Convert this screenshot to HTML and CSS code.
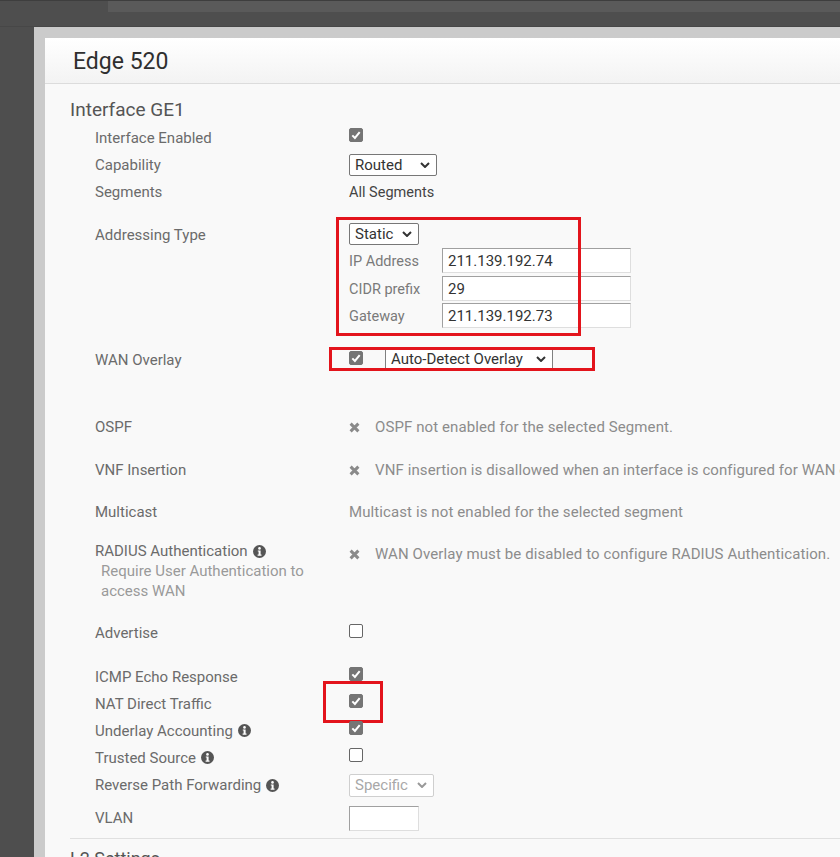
FILE: index.html
```html
<!DOCTYPE html>
<html>
<head>
<meta charset="utf-8">
<title>Edge 520</title>
<link rel="stylesheet" href="styles.css">
</head>
<body>
<div class="topbar"><div class="tabstrip"></div></div>
<div class="frame">
  <div class="panel">
    <div class="panel-head"><h1 class="title">Edge 520</h1></div>
    <div class="panel-body">
      <h2 class="section">Interface GE1</h2>
      <div class="form">
        <div class="row h27 first">
          <div class="label">Interface Enabled</div>
          <div class="val"><span class="cb on"><svg viewBox="0 0 14 14"><polyline points="3.3,7.4 5.9,10 10.7,4.2"/></svg></span></div>
        </div>
        <div class="row h27">
          <div class="label">Capability</div>
          <div class="val"><div class="sel w88"><span>Routed</span><svg class="chev" viewBox="0 0 10 6"><polyline points="1,1 5,5 9,1"/></svg></div></div>
        </div>
        <div class="row h28">
          <div class="label">Segments</div>
          <div class="val"><span class="plain">All Segments</span></div>
        </div>
        <div class="row addr">
          <div class="label top">Addressing Type</div>
          <div class="val col">
            <div class="sel w70 mt2"><span>Static</span><svg class="chev" viewBox="0 0 10 6"><polyline points="1,1 5,5 9,1"/></svg></div>
            <div class="subgrid">
              <div class="sublabel">IP Address</div><div class="input wide">211.139.192.74</div>
              <div class="sublabel">CIDR prefix</div><div class="input wide">29</div>
              <div class="sublabel">Gateway</div><div class="input wide">211.139.192.73</div>
            </div>
            <div class="mark mark-addr"></div>
          </div>
        </div>
        <div class="row wan">
          <div class="label">WAN Overlay</div>
          <div class="val">
            <span class="cb on"><svg viewBox="0 0 14 14"><polyline points="3.3,7.4 5.9,10 10.7,4.2"/></svg></span>
            <div class="sel w168 wansel"><span>Auto-Detect Overlay</span><svg class="chev" viewBox="0 0 10 6"><polyline points="1,1 5,5 9,1"/></svg></div>
            <div class="mark mark-wan"></div>
          </div>
        </div>
        <div class="row h42 ospf">
          <div class="label">OSPF</div>
          <div class="val msg"><svg class="x" viewBox="0 0 11 11"><path d="M1.6 1.6 L9.4 9.4 M9.4 1.6 L1.6 9.4"/></svg><span>OSPF not enabled for the selected Segment.</span></div>
        </div>
        <div class="row h42 vnf">
          <div class="label">VNF Insertion</div>
          <div class="val msg"><svg class="x" viewBox="0 0 11 11"><path d="M1.6 1.6 L9.4 9.4 M9.4 1.6 L1.6 9.4"/></svg><span>VNF insertion is disallowed when an interface is configured for WAN overlay.</span></div>
        </div>
        <div class="row h42">
          <div class="label">Multicast</div>
          <div class="val msg"><span class="noicon">Multicast is not enabled for the selected segment</span></div>
        </div>
        <div class="row radius">
          <div class="label top">
            <div class="lline">RADIUS Authentication <svg class="info" viewBox="0 0 13 13"><circle cx="6.5" cy="6.5" r="6.5"/><circle class="ii" cx="6.5" cy="3.4" r="1.3"/><path class="ii" d="M4.8 5.4 H7.6 V9.6 H8.5 V10.8 H4.6 V9.6 H5.6 V6.6 H4.8 Z"/></svg></div>
            <div class="subnote">Require User Authentication to access WAN</div>
          </div>
          <div class="val msg top3"><svg class="x" viewBox="0 0 11 11"><path d="M1.6 1.6 L9.4 9.4 M9.4 1.6 L1.6 9.4"/></svg><span>WAN Overlay must be disabled to configure RADIUS Authentication.</span></div>
        </div>
        <div class="row h26 advertise">
          <div class="label">Advertise</div>
          <div class="val"><span class="cb"></span></div>
        </div>
        <div class="row h27 icmp">
          <div class="label">ICMP Echo Response</div>
          <div class="val"><span class="cb on"><svg viewBox="0 0 14 14"><polyline points="3.3,7.4 5.9,10 10.7,4.2"/></svg></span></div>
        </div>
        <div class="row h27">
          <div class="label">NAT Direct Traffic</div>
          <div class="val"><span class="cb on"><svg viewBox="0 0 14 14"><polyline points="3.3,7.4 5.9,10 10.7,4.2"/></svg></span><div class="mark mark-nat"></div></div>
        </div>
        <div class="row h27">
          <div class="label">Underlay Accounting <svg class="info" viewBox="0 0 13 13"><circle cx="6.5" cy="6.5" r="6.5"/><circle class="ii" cx="6.5" cy="3.4" r="1.3"/><path class="ii" d="M4.8 5.4 H7.6 V9.6 H8.5 V10.8 H4.6 V9.6 H5.6 V6.6 H4.8 Z"/></svg></div>
          <div class="val"><span class="cb on"><svg viewBox="0 0 14 14"><polyline points="3.3,7.4 5.9,10 10.7,4.2"/></svg></span></div>
        </div>
        <div class="row h27">
          <div class="label">Trusted Source <svg class="info" viewBox="0 0 13 13"><circle cx="6.5" cy="6.5" r="6.5"/><circle class="ii" cx="6.5" cy="3.4" r="1.3"/><path class="ii" d="M4.8 5.4 H7.6 V9.6 H8.5 V10.8 H4.6 V9.6 H5.6 V6.6 H4.8 Z"/></svg></div>
          <div class="val"><span class="cb"></span></div>
        </div>
        <div class="row h28">
          <div class="label">Reverse Path Forwarding <svg class="info" viewBox="0 0 13 13"><circle cx="6.5" cy="6.5" r="6.5"/><circle class="ii" cx="6.5" cy="3.4" r="1.3"/><path class="ii" d="M4.8 5.4 H7.6 V9.6 H8.5 V10.8 H4.6 V9.6 H5.6 V6.6 H4.8 Z"/></svg></div>
          <div class="val"><div class="sel w85 disabled"><span>Specific</span><svg class="chev" viewBox="0 0 10 6"><polyline points="1,1 5,5 9,1"/></svg></div></div>
        </div>
        <div class="row h30 vlan">
          <div class="label">VLAN</div>
          <div class="val"><div class="input small"></div></div>
        </div>
      </div>
      <div class="divider"></div>
      <h2 class="section l2">L2 Settings</h2>
    </div>
  </div>
</div>
</body>
</html>
```

FILE: styles.css
```css
html, body {
  margin: 0;
  padding: 0;
  overflow: hidden;
  height: 100%;
}
body {
  background: #4e4e4e;
  font-family: Roboto, "Liberation Sans", sans-serif;
  border-top: 1px solid #3e3e3e;
  box-sizing: border-box;
}
.topbar {
  height: 26px;
  border-bottom: 1px solid #474747;
  box-sizing: border-box;
}
.tabstrip {
  margin-left: 108px;
  height: 11px;
  background: #5a5a5a;
}
.frame {
  margin-left: 34px;
  background: #cbcbcb;
  padding: 11px 0 0 11px;
  height: 900px;
}
.panel {
  background: #f9f9f9;
  height: 100%;
}
.panel-head {
  height: 45px;
  background: linear-gradient(#ffffff, #f3f3f3);
  border-bottom: 1px solid #dcdcdc;
  display: flex;
  align-items: center;
  padding-left: 28px;
}
.title {
  margin: 0;
  font-size: 23px;
  font-weight: 400;
  color: #2f2f2f;
  position: relative;
  top: 1px;
}
.panel-body {
  padding-left: 25px;
}
.section {
  margin: 0;
  padding-top: 14px;
  font-size: 19px;
  font-weight: 400;
  line-height: 24px;
  color: #555;
}
.form {
  padding-left: 25px;
  margin-top: 2px;
}
.row {
  display: flex;
  align-items: center;
  font-size: 15px;
  color: #6b6b6b;
}
.h26 { height: 26px; }
.h27 { height: 27px; }
.h28 { height: 28px; }
.h30 { height: 30px; }
.h42 { height: 42px; }
.label {
  width: 254px;
  flex: none;
  line-height: 20px;
  display: flex;
  align-items: center;
}
.label.top { align-self: flex-start; }
.val {
  position: relative;
  display: flex;
  align-items: center;
  flex: 1;
  min-width: 0;
}
.val.col {
  flex-direction: column;
  align-items: flex-start;
}
.cb {
  width: 14px;
  height: 14px;
  box-sizing: border-box;
  border-radius: 2px;
  border: 1px solid #666;
  background: #fff;
  margin-bottom: 5px;
  display: block;
  flex: none;
}
.cb.on {
  background: #757575;
  border-color: #757575;
}
.cb svg {
  display: block;
  width: 14px;
  height: 14px;
  margin: -1px;
  fill: none;
  stroke: #fff;
  stroke-width: 2;
}
.sel {
  height: 22px;
  box-sizing: border-box;
  border: 1px solid #777;
  border-radius: 2px;
  background: #fff;
  display: flex;
  align-items: center;
  justify-content: space-between;
  padding: 0 6px 0 5px;
  font-size: 15px;
  color: #333;
}
.sel .chev {
  width: 10px;
  height: 6px;
  fill: none;
  stroke: #333;
  stroke-width: 2;
}
.w88 { width: 88px; }
.w70 { width: 70px; }
.w85 { width: 85px; height: 23px; }
.w168 { width: 168px; }
.mt2 { margin-top: 2px; }
.sel.disabled {
  border-color: #cfcfcf;
  color: #a8a8a8;
}
.sel.disabled .chev { stroke: #999; }
.plain {
  font-size: 14.5px;
  color: #444;
}
.addr {
  margin-top: 15px;
  align-items: flex-start;
}
.addr .label {
  line-height: 26px;
  padding-top: 1px;
}
.subgrid {
  margin-top: 3px;
  display: grid;
  grid-template-columns: 93px 189px;
  grid-auto-rows: 25px;
  row-gap: 2.5px;
  align-items: center;
}
.sublabel {
  color: #7a7a7a;
  font-size: 14.5px;
  padding-top: 2px;
}
.input {
  height: 25px;
  box-sizing: border-box;
  background: #fff;
  border: 1px solid #dedede;
  border-top-color: #a0a0a0;
  border-left-color: #a0a0a0;
  font-size: 15px;
  color: #333;
  padding: 2px 0 0 5px;
  line-height: 21px;
}
.input.wide { width: 189px; }
.input.small { width: 70px; }
.wan {
  margin-top: 20px;
  height: 22px;
}
.wan .label { padding-top: 1px; }
.wan .cb { margin-bottom: 3px; }
.wansel {
  margin-left: 22px;
  border-color: #808080;
}
.ospf { margin-top: 36px; }
.vnf { margin-top: 1px; }
.msg {
  color: #8c8c8c;
  white-space: nowrap;
  font-size: 15px;
  letter-spacing: 0.1px;
}
.msg .x {
  width: 11px;
  height: 11px;
  flex: none;
  stroke: #8a8a8a;
  stroke-width: 3;
  fill: none;
  margin-right: 15px;
}
.noicon { display: block; }
.radius {
  margin-top: 8px;
  align-items: flex-start;
}
.radius .label {
  flex-direction: column;
  align-items: flex-start;
}
.lline {
  display: flex;
  align-items: center;
}
.subnote {
  color: #9a9a9a;
  padding-left: 6px;
  width: 215px;
}
.top3 {
  padding-top: 3px;
  line-height: 20px;
}
.info {
  width: 13px;
  height: 13px;
  margin-left: 5px;
  flex: none;
}
.info circle { fill: #555; }
.info .ii { fill: #fff; }
.advertise { margin-top: 19px; }
.icmp { margin-top: 17px; }
.vlan { margin-top: 4px; }
.mark {
  position: absolute;
  border: 3px solid #e3141c;
  box-sizing: border-box;
  pointer-events: none;
}
.mark-addr {
  left: -13px;
  top: -4px;
  width: 245px;
  height: 119px;
}
.mark-wan {
  left: -20px;
  top: -1px;
  width: 266px;
  height: 24px;
}
.mark-nat {
  left: -26px;
  top: -13px;
  width: 60px;
  height: 42px;
}
.divider {
  margin-top: 5px;
  border-top: 1px solid #e0e0e0;
}
.section.l2 {
  padding-top: 8px;
  font-size: 18px;
  color: #555;
}
```
